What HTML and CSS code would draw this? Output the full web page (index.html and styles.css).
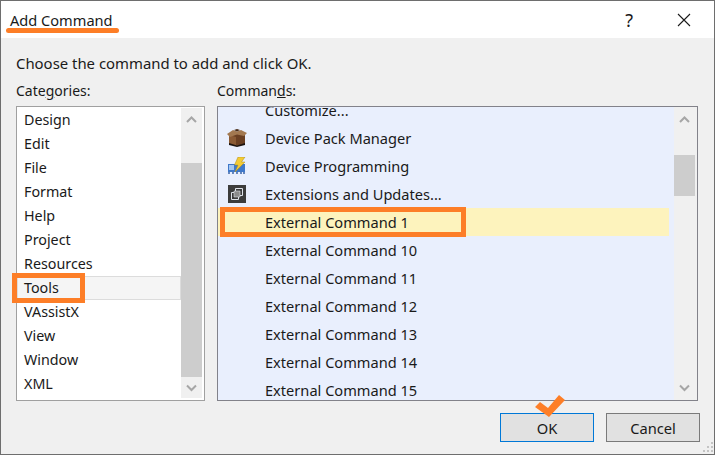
FILE: index.html
```html
<!DOCTYPE html>
<html lang="en">
<head>
    <meta charset="UTF-8">
    <meta name="viewport" content="width=device-width, initial-scale=1.0">
    <title>Add Command</title>
    <link rel="stylesheet" href="styles.css">
</head>
<body>
    <div class="dialog">
        <header class="titlebar">
            <span class="title">Add Command</span>
            <span class="help">?</span>
            <svg class="close" width="14" height="14" viewBox="0 0 14 14"><path d="M1 1L13 13M13 1L1 13" stroke="#1a1a1a" stroke-width="1.1" fill="none"/></svg>
        </header>

        <main class="content">
            <p class="intro">Choose the command to add and click OK.</p>
            <div class="columns">
                <section class="cat-col">
                    <div class="col-label">Cate<u>g</u>ories:</div>
                    <div class="listbox">
                        <ul class="cat-list">
                            <li>Design</li>
                            <li>Edit</li>
                            <li>File</li>
                            <li>Format</li>
                            <li>Help</li>
                            <li>Project</li>
                            <li>Resources</li>
                            <li class="current">Tools</li>
                            <li>VAssistX</li>
                            <li>View</li>
                            <li>Window</li>
                            <li>XML</li>
                        </ul>
                        <div class="scrollbar">
                            <svg class="arrow" width="21" height="21" viewBox="0 0 21 21"><path d="M6 14L10.5 9.5L15 14" stroke="#a6a6a6" stroke-width="2" fill="none"/></svg>
                            <div class="track cat-track"><div class="thumb"></div></div>
                            <svg class="arrow" width="21" height="21" viewBox="0 0 21 21"><path d="M6 8.5L10.5 13L15 8.5" stroke="#a6a6a6" stroke-width="2" fill="none"/></svg>
                        </div>
                    </div>
                </section>
                <section class="cmd-col">
                    <div class="col-label">Comman<u>d</u>s:</div>
                    <div class="listbox">
                        <ul class="cmd-list">
                            <li><span class="ico"></span>Customize...</li>
                            <li>
                                <span class="ico">
                                    <svg width="20" height="18" viewBox="0 0 20 18">
                                        <path d="M2 5H18V15L10 17L2 15Z" fill="#6a3f22"/>
                                        <path d="M2 6L9 8V17L2 15Z" fill="#8a5a34"/>
                                        <path d="M0 5L6 1L10 2.5L14 1L20 4L17 7L10 5.5L3 8Z" fill="#a27850"/>
                                        <path d="M7 1L10 0L13 1L10 2.5Z" fill="#4a2c16"/>
                                        <path d="M2 14L10 16.5L18 14V16L10 18L2 16Z" fill="#1c1410"/>
                                    </svg>
                                </span>Device Pack Manager
                            </li>
                            <li>
                                <span class="ico">
                                    <svg width="20" height="18" viewBox="0 0 20 18">
                                        <path d="M1 7H18V15H1Z" fill="#3f78c9"/>
                                        <path d="M2 15V17M6 15V17M10 15V17M14 15V17M17 15V17" stroke="#2c5aa0" stroke-width="1.4"/>
                                        <path d="M2 8H7V13H2Z" fill="#a4c6f0"/>
                                        <path d="M11 0H18L14.5 5H18L8 15L11 8H7.5Z" fill="#f4cb34" stroke="#a98a20" stroke-width=".5"/>
                                    </svg>
                                </span>Device Programming
                            </li>
                            <li>
                                <span class="ico">
                                    <svg width="18" height="18" viewBox="0 0 18 18">
                                        <path d="M0 0H18V18H0Z" fill="#3c3c3c"/>
                                        <path d="M7.5 3.5H14.5V10.5H10.5V14.5H3.5V7.5H7.5Z" fill="#3c3c3c" stroke="#dfe3ea"/>
                                        <path d="M6 6H12V12H6Z" fill="#8c8c8c" stroke="#dfe3ea" stroke-width=".6"/>
                                    </svg>
                                </span>Extensions and Updates...
                            </li>
                            <li class="selected"><span class="ico"></span>External Command 1</li>
                            <li><span class="ico"></span>External Command 10</li>
                            <li><span class="ico"></span>External Command 11</li>
                            <li><span class="ico"></span>External Command 12</li>
                            <li><span class="ico"></span>External Command 13</li>
                            <li><span class="ico"></span>External Command 14</li>
                            <li><span class="ico"></span>External Command 15</li>
                        </ul>
                        <div class="scrollbar">
                            <svg class="arrow" width="21" height="21" viewBox="0 0 21 21"><path d="M6 14L10.5 9.5L15 14" stroke="#a6a6a6" stroke-width="2" fill="none"/></svg>
                            <div class="track cmd-track"><div class="thumb"></div></div>
                            <svg class="arrow" width="21" height="21" viewBox="0 0 21 21"><path d="M6 8.5L10.5 13L15 8.5" stroke="#a6a6a6" stroke-width="2" fill="none"/></svg>
                        </div>
                    </div>
                </section>
            </div>
            <div class="buttons">
                <button class="btn btn-default">OK</button>
                <button class="btn">Cancel</button>
            </div>
        </main>

        <svg class="grip" width="14" height="14" viewBox="0 0 14 14">
            <path d="M11 2h2v2h-2zM7 6h2v2H7zM11 6h2v2h-2zM3 10h2v2H3zM7 10h2v2H7zM11 10h2v2h-2z" fill="#c4c4c4"/>
        </svg>

        <!-- orange annotations on top of the screenshot -->
        <div class="mark-title"></div>
        <div class="mark-box mark-tools"></div>
        <div class="mark-box mark-cmd"></div>
        <svg class="mark-check" width="32" height="24" viewBox="0 0 32 24"><path d="M0 12L5 7L13 13L24 0L30 5L14 22Z" fill="#fd7e27"/></svg>
    </div>
</body>
</html>
```

FILE: styles.css
```css
* {
    box-sizing: border-box;
}
body {
    margin: 0;
    font-family: "Noto Sans", "Open Sans", sans-serif;
    font-size: 14px;
    color: #1a1a1a;
    background: #555;
}
.dialog {
    position: relative;
    width: 715px;
    height: 455px;
    background-color: #f0f0f0;
    border: 1px solid #6e6e6e;
    overflow: hidden;
}
.titlebar {
    display: flex;
    align-items: center;
    height: 37px;
    background-color: white;
    padding-left: 9px;
}
.title {
    flex: 1;
    font-size: 14.6px;
}
.help {
    font-size: 18px;
    margin-right: 44px;
}
.close {
    margin-right: 23px;
}
.content {
    padding: 0 14px 0 15px;
}
.intro {
    margin: 0;
    padding-top: 15px;
    line-height: 20px;
    font-size: 14.9px;
}
.columns {
    display: flex;
    gap: 12px;
    margin-top: 8px;
}
.col-label {
    line-height: 20px;
    margin-bottom: 5px;
}
.cat-col {
    width: 189px;
}
.cmd-col {
    width: 481px;
}
.listbox {
    display: flex;
    height: 295px;
    background-color: white;
    border: 1px solid #a0a0a0;
    overflow: hidden;
}
.cmd-col .listbox {
    border-color: #82828a;
    background-color: #f0f0f0;
}
.cat-list, .cmd-list {
    flex: 1;
    list-style: none;
    margin: 0;
    padding: 0;
    overflow: hidden;
}
.cat-list {
    padding-top: 1px;
    font-size: 14.3px;
}
.cat-list li {
    height: 24px;
    line-height: 23px;
    padding-left: 7px;
}
.cat-list .current {
    background-color: #f5f5f5;
    border: 1px solid #dcdcdc;
    line-height: 21px;
    padding-left: 6px;
}
.cmd-list {
    background-color: #e9effd;
    font-size: 14.6px;
}
.cmd-list li {
    display: flex;
    align-items: center;
    height: 28px;
    padding-left: 4px;
    margin-right: 5px;
}
.cmd-list li:first-child {
    margin-top: -11px;
}
.cmd-list .selected {
    background-color: #fdf3bd;
}
.ico {
    display: flex;
    justify-content: center;
    width: 30px;
    margin-right: 13px;
}
.scrollbar {
    display: flex;
    flex-direction: column;
    flex: none;
    width: 21px;
    margin: 1px 2px 2px 0;
    background-color: #f0f0f0;
}
.arrow {
    flex: none;
}
.track {
    flex: 1;
}
.thumb {
    background-color: #cdcdcd;
}
.cat-track {
    padding-top: 34px;
}
.cat-track .thumb {
    height: 214px;
}
.cmd-track {
    padding-top: 26px;
}
.cmd-track .thumb {
    height: 41px;
}
.buttons {
    display: flex;
    justify-content: flex-end;
    gap: 12px;
    margin-top: 12px;
}
.btn {
    width: 94px;
    height: 29px;
    padding: 0;
    font: inherit;
    font-size: 14.7px;
    color: #1a1a1a;
    background-color: #e1e1e1;
    border: 1px solid #7a7a7a;
}
.btn-default {
    border-color: #0078d7;
}
.grip {
    position: absolute;
    right: 0;
    bottom: 0;
}
.mark-title {
    position: absolute;
    left: 5px;
    top: 27px;
    width: 113px;
    height: 5px;
    background-color: #fd7e27;
    border-radius: 3px;
}
.mark-box {
    position: absolute;
    border: 5px solid #fd7e27;
}
.mark-tools {
    left: 11px;
    top: 272px;
    width: 73px;
    height: 30px;
}
.mark-cmd {
    left: 219px;
    top: 206px;
    width: 246px;
    height: 30px;
}
.mark-check {
    position: absolute;
    left: 534px;
    top: 394px;
}
```
